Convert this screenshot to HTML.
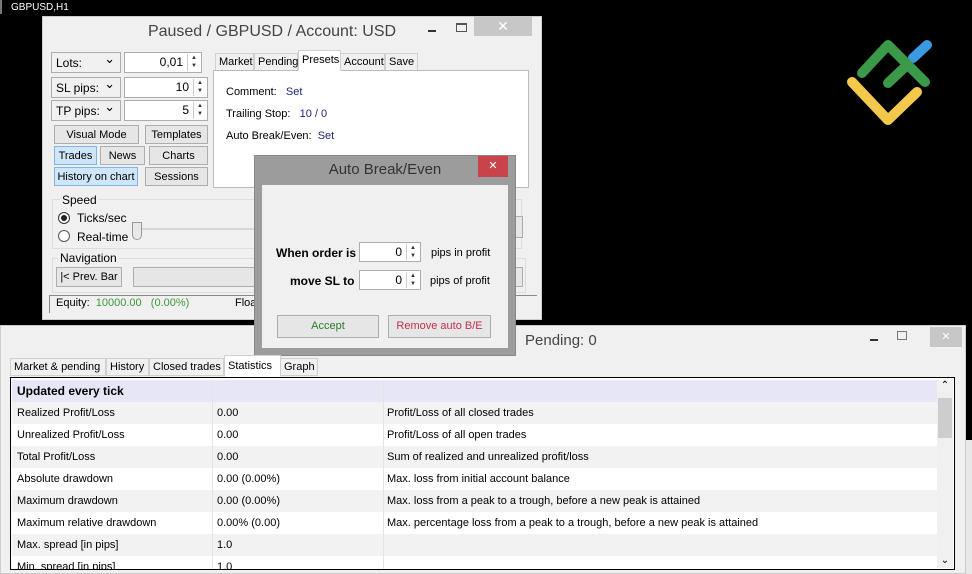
<!DOCTYPE html>
<html><head><meta charset="utf-8"><style>
*{box-sizing:border-box;margin:0;padding:0}
body{width:972px;height:574px;background:#000;position:relative;overflow:hidden;font-family:"Liberation Sans",sans-serif;font-size:11px;color:#000}
.a{position:absolute;white-space:nowrap}
.btn{position:absolute;background:#e6e6e6;border:1px solid #adadad;text-align:center;line-height:18px;font-size:11px;white-space:nowrap}
.blue{background:#cfe6f8;border-color:#7eb4ea}
.inp{position:absolute;background:#fff;border:1px solid #abadb3;text-align:right;padding-right:18px;line-height:19px;font-size:12px}
.sp{position:absolute;right:1px;top:1px;width:13px;bottom:1px;border-left:1px solid #ccc;font-size:6px;line-height:8px;text-align:center;color:#333}
.sel{position:absolute;background:#f0f0f0;border:1px solid #adadad;padding-left:4px;line-height:20px;font-size:12px}
.sel:after{content:"⌄";position:absolute;right:5px;top:-4px;font-size:13px}
.tab{position:absolute;border:1px solid #d0d0d0;background:#f0f0f0;padding:0 3px;line-height:16px;font-size:11px;white-space:nowrap}
.row{position:absolute;left:12px;width:925px;height:22px;line-height:22px;font-size:11px}
.row span{position:absolute;white-space:nowrap}
</style></head><body>
<div class="a" style="left:0;top:0;width:972px;height:14px;background:#000;border-left:2px solid #777"></div>
<div class="a" style="left:11px;top:2px;color:#fff;font-size:10px">GBPUSD,H1</div>
<svg class="a" style="left:840px;top:30px" width="100" height="100" viewBox="0 0 100 100">
<g fill="none" stroke-linecap="round" stroke-linejoin="round" stroke-width="10">
<path d="M87 15 L73 28" stroke="#3a9be0"/>
<path d="M22 43 L48 15 L85 52" stroke="#3a9a4a"/>
<path d="M48 53 L65 37" stroke="#3a9a4a"/>
<path d="M12 52 L48 90 L77 62" stroke="#f2c94c"/>
</g></svg>
<!-- main window -->
<div class="a" style="left:42px;top:16px;width:500px;height:304px;background:#f0f0f0;border:1px solid #ccc"></div>
<div class="a" style="left:42px;top:20px;width:500px;text-align:center;font-size:16px;color:#444;line-height:24px;padding-right:40px">Paused / GBPUSD / Account: USD</div>
<div class="a" style="left:428px;top:30px;width:8px;height:2px;background:#333"></div>
<div class="a" style="left:456px;top:23px;width:11px;height:9px;border:1px solid #555;border-top-width:2px"></div>
<div class="a" style="left:474px;top:16px;width:58px;height:20px;background:#c7c7c7;color:#fff;text-align:center;font-size:14px;line-height:20px">✕</div>
<div class="sel" style="left:51px;top:52px;width:70px;height:21px">Lots:</div>
<div class="inp" style="left:124px;top:52px;width:78px;height:21px">0,01<div class="sp">▲<br>▼</div></div>
<div class="sel" style="left:51px;top:77px;width:70px;height:21px">SL pips:</div>
<div class="inp" style="left:124px;top:77px;width:84px;height:21px">10<div class="sp">▲<br>▼</div></div>
<div class="sel" style="left:51px;top:100px;width:70px;height:21px">TP pips:</div>
<div class="inp" style="left:124px;top:100px;width:84px;height:21px">5<div class="sp">▲<br>▼</div></div>
<div class="btn" style="left:54px;top:125px;width:85px;height:19px">Visual Mode</div>
<div class="btn" style="left:145px;top:125px;width:63px;height:19px">Templates</div>
<div class="btn blue" style="left:54px;top:146px;width:43px;height:19px">Trades</div>
<div class="btn" style="left:100px;top:146px;width:45px;height:19px">News</div>
<div class="btn" style="left:149px;top:146px;width:59px;height:19px">Charts</div>
<div class="btn blue" style="left:54px;top:167px;width:84px;height:19px">History on chart</div>
<div class="btn" style="left:145px;top:167px;width:63px;height:19px">Sessions</div>
<div class="a" style="left:52px;top:199px;width:470px;height:50px;border:1px solid #ddd"></div>
<div class="a" style="left:60px;top:193px;background:#f0f0f0;padding:0 2px;font-size:12px">Speed</div>
<div class="a" style="left:58px;top:212px;width:12px;height:12px;border:1px solid #333;border-radius:50%;background:#fff"><div class="a" style="left:2px;top:2px;width:6px;height:6px;border-radius:50%;background:#222"></div></div>
<div class="a" style="left:77px;top:211px;font-size:12px">Ticks/sec</div>
<div class="a" style="left:58px;top:230px;width:12px;height:12px;border:1px solid #555;border-radius:50%;background:#fff"></div>
<div class="a" style="left:77px;top:230px;font-size:12px">Real-time</div>
<div class="a" style="left:140px;top:228px;width:380px;height:2px;background:#d6d6d6"></div>
<div class="a" style="left:132px;top:222px;width:10px;height:18px;border:1px solid #999;background:#e8e8e8;border-radius:0 0 5px 5px"></div>
<div class="a" style="left:502px;top:216px;width:21px;height:22px;border:1px solid #adadad;background:#e6e6e6"></div>
<div class="a" style="left:52px;top:258px;width:474px;height:35px;border:1px solid #ddd"></div>
<div class="a" style="left:58px;top:251px;background:#f0f0f0;padding:0 2px;font-size:12px">Navigation</div>
<div class="btn" style="left:56px;top:267px;width:66px;height:20px">|&lt; Prev. Bar</div>
<div class="btn" style="left:133px;top:267px;width:390px;height:20px"></div>
<div class="a" style="left:49px;top:295px;width:488px;height:18px;border-top:1px solid #888;border-left:1px solid #888"></div>
<div class="a" style="left:56px;top:297px">Equity:&nbsp; <span style="color:#3a9a3a">10000.00&nbsp;&nbsp; (0.00%)</span></div>
<div class="a" style="left:235px;top:297px">Floa</div>
<div class="tab" style="left:215px;top:53px;width:39px">Market</div>
<div class="tab" style="left:254px;top:53px;width:44px">Pending</div>
<div class="tab" style="left:298px;top:50px;width:43px;background:#fff;border-bottom-color:#fff;line-height:19px;z-index:2">Presets</div>
<div class="tab" style="left:340px;top:53px;width:45px">Account</div>
<div class="tab" style="left:385px;top:53px;width:33px">Save</div>
<div class="a" style="left:213px;top:70px;width:316px;height:118px;background:#fff;border:1px solid #bbb"></div>
<div class="a" style="left:226px;top:86px">Comment:&nbsp;&nbsp; <span style="color:#22227a">Set</span></div>
<div class="a" style="left:226px;top:108px">Trailing Stop:&nbsp;&nbsp; <span style="color:#22227a">10 / 0</span></div>
<div class="a" style="left:226px;top:130px">Auto Break/Even:&nbsp; <span style="color:#22227a">Set</span></div>
<!-- bottom window -->
<div class="a" style="left:965px;top:440px;width:7px;height:134px;background:#e8e8e8"></div>
<div class="a" style="left:0;top:325px;width:966px;height:249px;background:#f0f0f0;border:1px solid #ccc"></div>
<div class="a" style="left:525px;top:332px;font-size:15px;color:#444">Pending: 0</div>
<div class="a" style="left:870px;top:339px;width:8px;height:2px;background:#333"></div>
<div class="a" style="left:897px;top:331px;width:10px;height:9px;border:1px solid #777"></div>
<div class="a" style="left:930px;top:327px;width:32px;height:20px;background:#c7c7c7;color:#fff;text-align:center;line-height:20px">✕</div>
<div class="tab" style="left:10px;top:358px;width:96px">Market &amp; pending</div>
<div class="tab" style="left:106px;top:358px;width:43px">History</div>
<div class="tab" style="left:149px;top:358px;width:75px">Closed trades</div>
<div class="tab" style="left:224px;top:355px;width:57px;background:#fff;border-bottom-color:#fff;line-height:20px;z-index:2">Statistics</div>
<div class="tab" style="left:280px;top:358px;width:38px">Graph</div>
<div class="a" style="left:10px;top:377px;width:945px;height:193px;border:1px solid #000;background:#fff;overflow:hidden">
<div class="a" style="left:926px;top:2px;width:16px;height:188px;background:#f0f0f0"><div class="a" style="top:0;width:16px;text-align:center;font-size:10px">⌃</div><div class="a" style="top:18px;left:1px;width:14px;height:40px;background:#cdcdcd"></div><div class="a" style="bottom:2px;width:16px;text-align:center;font-size:10px">⌄</div></div>
</div>
<div class="row" style="top:380px;background:#e6e6f6;font-weight:bold;font-size:12px"><span style="left:5px">Updated every tick</span></div>
<div class="row" style="top:402px;background:#f2f2f2"><span style="left:5px">Realized Profit/Loss</span><span style="left:205px">0.00</span><span style="left:375px">Profit/Loss of all closed trades</span></div>
<div class="row" style="top:424px"><span style="left:5px">Unrealized Profit/Loss</span><span style="left:205px">0.00</span><span style="left:375px">Profit/Loss of all open trades</span></div>
<div class="row" style="top:446px;background:#f2f2f2"><span style="left:5px">Total Profit/Loss</span><span style="left:205px">0.00</span><span style="left:375px">Sum of realized and unrealized profit/loss</span></div>
<div class="row" style="top:468px"><span style="left:5px">Absolute drawdown</span><span style="left:205px">0.00 (0.00%)</span><span style="left:375px">Max. loss from initial account balance</span></div>
<div class="row" style="top:490px;background:#f2f2f2"><span style="left:5px">Maximum drawdown</span><span style="left:205px">0.00 (0.00%)</span><span style="left:375px">Max. loss from a peak to a trough, before a new peak is attained</span></div>
<div class="row" style="top:512px"><span style="left:5px">Maximum relative drawdown</span><span style="left:205px">0.00% (0.00)</span><span style="left:375px">Max. percentage loss from a peak to a trough, before a new peak is attained</span></div>
<div class="row" style="top:534px;background:#f2f2f2"><span style="left:5px">Max. spread [in pips]</span><span style="left:205px">1.0</span></div>
<div class="row" style="top:556px;height:13px;overflow:hidden"><span style="left:5px">Min. spread [in pips]</span><span style="left:205px">1.0</span></div>
<div class="a" style="left:212px;top:380px;width:1px;height:189px;background:#e4e4e4"></div>
<div class="a" style="left:383px;top:380px;width:1px;height:189px;background:#e4e4e4"></div>
<!-- dialog -->
<div class="a" style="left:254px;top:155px;width:262px;height:201px;background:#9c9c9c;border:1px solid #888"></div>
<div class="a" style="left:254px;top:161px;width:262px;text-align:center;font-size:15px;color:#333">Auto Break/Even</div>
<div class="a" style="left:478px;top:156px;width:30px;height:21px;background:#c9434a;color:#fff;text-align:center;line-height:21px">✕</div>
<div class="a" style="left:262px;top:185px;width:246px;height:163px;background:#f0f0f0"></div>
<div class="a" style="left:276px;top:246px;font-weight:bold;font-size:12px">When order is</div>
<div class="inp" style="left:359px;top:242px;width:62px;height:20px">0<div class="sp">▲<br>▼</div></div>
<div class="a" style="left:431px;top:247px;font-size:11px">pips in profit</div>
<div class="a" style="left:290px;top:274px;font-weight:bold;font-size:12px">move SL to</div>
<div class="inp" style="left:359px;top:270px;width:62px;height:20px">0<div class="sp">▲<br>▼</div></div>
<div class="a" style="left:430px;top:275px;font-size:11px">pips of profit</div>
<div class="btn" style="left:277px;top:315px;width:102px;height:23px;line-height:21px;color:#2a7a2a">Accept</div>
<div class="btn" style="left:388px;top:315px;width:103px;height:23px;line-height:21px;color:#c03050">Remove auto B/E</div>
</body></html>
